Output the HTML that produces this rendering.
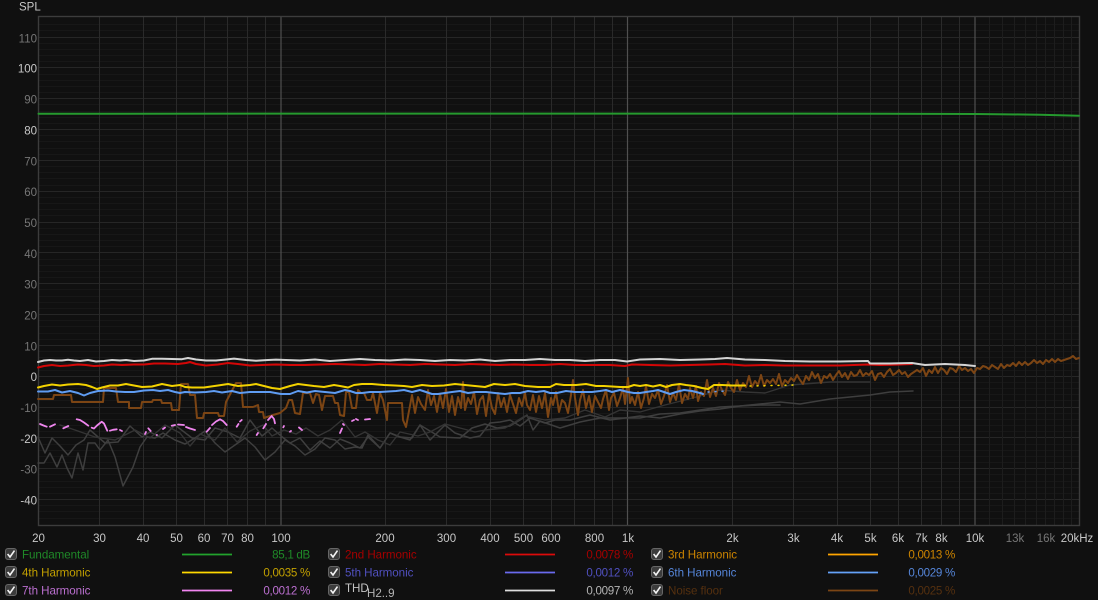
<!DOCTYPE html>
<html><head><meta charset="utf-8"><title>SPL</title>
<style>
html,body{margin:0;padding:0;background:#101010;width:1098px;height:600px;overflow:hidden}
svg{display:block;filter:blur(.35px)}
text{font-family:"Liberation Sans",sans-serif}
.ax{font-size:11.5px;fill:#c8c8c8}
.dim{fill:#767676}
.lg{font-size:11.6px;letter-spacing:-.05px}
.val{letter-spacing:-.3px}
.c{fill:none;stroke-linejoin:round;stroke-linecap:round}
</style></head><body>
<svg width="1098" height="600" viewBox="0 0 1098 600" xmlns="http://www.w3.org/2000/svg">
<rect width="1098" height="600" fill="#101010"/>
<!-- minor horizontal -->
<path stroke="#171717" stroke-width="1" fill="none" d="M38 24.500H1079M38 30.500H1079M38 43.500H1079M38 49.500H1079M38 55.500H1079M38 61.500H1079M38 74.500H1079M38 80.500H1079M38 86.500H1079M38 92.500H1079M38 104.500H1079M38 111.500H1079M38 117.500H1079M38 123.500H1079M38 135.500H1079M38 141.500H1079M38 148.500H1079M38 154.500H1079M38 166.500H1079M38 172.500H1079M38 178.500H1079M38 185.500H1079M38 197.500H1079M38 203.500H1079M38 209.500H1079M38 215.500H1079M38 228.500H1079M38 234.500H1079M38 240.500H1079M38 246.500H1079M38 259.500H1079M38 265.500H1079M38 271.500H1079M38 277.500H1079M38 289.500H1079M38 296.500H1079M38 302.500H1079M38 308.500H1079M38 320.500H1079M38 326.500H1079M38 333.500H1079M38 339.500H1079M38 351.500H1079M38 357.500H1079M38 363.500H1079M38 370.500H1079M38 382.500H1079M38 388.500H1079M38 394.500H1079M38 400.500H1079M38 413.500H1079M38 419.500H1079M38 425.500H1079M38 431.500H1079M38 444.500H1079M38 450.500H1079M38 456.500H1079M38 462.500H1079M38 474.500H1079M38 481.500H1079M38 487.500H1079M38 493.500H1079M38 505.500H1079M38 511.500H1079M38 518.500H1079"/>
<!-- major horizontal -->
<path stroke="#262626" stroke-width="1" fill="none" d="M38 37.500H1079M38 67.500H1079M38 98.500H1079M38 129.500H1079M38 160.500H1079M38 191.500H1079M38 222.500H1079M38 252.500H1079M38 283.500H1079M38 314.500H1079M38 345.500H1079M38 376.500H1079M38 407.500H1079M38 437.500H1079M38 468.500H1079M38 499.500H1079"/>
<!-- vertical -->
<path stroke="#2a2a2a" stroke-width="1" fill="none" d="M99.500 16V525M143.500 16V525M176.500 16V525M204.500 16V525M227.500 16V525M247.500 16V525M265.500 16V525M385.500 16V525M446.500 16V525M490.500 16V525M523.500 16V525M551.500 16V525M574.500 16V525M594.500 16V525M612.500 16V525M732.500 16V525M793.500 16V525M837.500 16V525M870.500 16V525M898.500 16V525M921.500 16V525M941.500 16V525M959.500 16V525"/>
<path stroke="#1d1d1d" stroke-width="1" fill="none" d="M989.500 16V525M1002.500 16V525M1014.500 16V525M1025.500 16V525M1036.500 16V525M1045.500 16V525M1054.500 16V525M1063.500 16V525M1071.500 16V525"/>
<path stroke="#505050" stroke-width="1.200" fill="none" d="M281 16V525M627.500 16V525M975 16V525"/>
<rect x="38.500" y="16.500" width="1041" height="509" fill="none" stroke="#3c3c3c" stroke-width="1.400"/>

<!-- gray harmonics traces -->
<g class="c" stroke="#3e3e3e" stroke-width="1.500">
<polyline points="38,463 44,463 50,453 57,467 62,455 67,468 72,478 78,453 83,470 88,443 95,443 100,450 108,440 115,457 123,486 133,467 140,447 147,437 155,438 163,433 175,440 185,444 195,438 205,431 215,443 225,452 235,445 245,438 255,447 265,460 275,452 285,440 295,446 305,455 315,449 325,438 335,440 345,449 355,447 362,448 368,435 380,448 390,433 400,437 410,440 420,425 440,437 460,438 472,428 485,424 497,428 510,426 520,420 527,415 533,430 540,421 560,428 580,422 600,418 620,418 640,418 660,414 680,413 700,410 720,407 740,406 760,404 780,402 800,404 830,399 850,397 870,395 890,392 913,391"/>
<polyline points="38,437 45,453 52,438 60,446 68,455 76,445 84,440 90,430 105,443 118,442 130,426 142,437 150,432 162,438 175,425 192,438 205,440 215,428 228,432 240,438 250,420 262,436 272,428 281,436 290,443 300,438 310,450 320,441 330,448 340,439 350,443 360,448 368,437 380,448 390,433 400,437 412,438 420,425 430,440 445,425 455,433 470,438 480,436 490,423 500,422 510,420 520,426 530,418 545,423 555,420 570,420 590,415 610,420 625,418 640,416 660,418 680,414 700,411 720,409 740,406 760,405 780,405"/>
</g>
<polyline class="c" stroke="#343434" stroke-width="1.400" points="60,425 75,430 95,437 115,440 135,430 150,438 165,425 180,433 190,446 200,434 215,440 225,428 237,442 250,431 263,425 272,436 284,430 296,434 306,428 318,436 330,430 342,420 355,437 365,432 378,440 390,445 400,432 418,436 430,432 445,424 460,428 475,432 485,430 505,428 525,416 545,420 565,418 585,410 605,417 620,410 640,412 665,405 685,400 700,396 720,390 745,392 765,393 790,385 830,382 870,382"/>
<!-- noise floor -->
<polyline class="c" stroke="#7c4514" stroke-width="2" points="38,399 53,399 54,395 71,395 72,402 103,402 104,388 116,388 118,402 129,402 129,408 141,408 142,402 152,402 153,400 161,400 162,403 171,403 172,410 179,410 181,384 188,384 190,395 195,395 197,418 203,418 204,413 218,413 219,416 224,416 226,402 236,383 241,383 243,407 253,407 258,405 259,412 263,412 264,418 273,415 280,413 286,408 289,400 292,400 295,413 300,414 303,393 310,393 313,403 316,394 319,395 322,410 325,396 333,396 335,403 338,403 340,415 344,416 346,392 349,392 352,408 356,408 358,390 361,393 364,393 367,400 371,400 373,393 377,413 380,393 383,400 387,420 388,403 394,403 402,403 403,420 406,427 412,395 415,413 418,397 421,404 425,410 428,390 431,405 434,396 437,412 440,394 443,408 446,389 449,412 452,396 455,415 458,397 461,408 463,382 465,410 468,398 471,404 474,392 477,414 480,400 483,396 486,416 489,394 492,408 495,414 498,393 501,407 504,398 507,412 510,395 513,404 516,413 519,398 522,406 525,393 527,405 530,410 533,395 536,412 539,396 542,408 545,393 548,417 551,398 553,405 556,392 559,412 562,400 565,403 568,413 571,395 573,380 575,398 578,415 580,400 583,390 586,408 589,396 592,412 595,396 598,402 601,408 603,399 606,390 609,410 611,398 614,393 617,406 620,398 623,388 625,404 628,378 630,403 632,397 635,405 638,392 641,408 644,398 646,386 649,404 652,394 655,398 658,390 661,404 664,396 667,385 670,402 673,393 676,400 679,384 682,403 685,394 688,399 690,388 693,398 696,386 698,401 701,392 704,396 707,380 710,397 713,388 716,396 719,383 722,390 725,395 728,382 731,388 734,392 737,380 740,390 743,383 746,387 749,376 752,387 755,381 758,385 761,375 764,386 767,380 770,383 773,379 776,384 779,374 782,386 785,380 788,383 791,378 794,381 797,375 800,380 803,384 806,376 809,380 812,372 815,378 818,374 821,383 824,376 827,378 830,374 833,380 836,375 839,371 842,377 845,373 848,379 851,372 854,376 857,375 860,370 863,376 866,373 869,375 872,371 875,380 878,374 881,373 884,377 887,372 890,369 893,375 896,373 899,370 902,374 905,372 908,377 911,374 914,372 917,370 920,372 923,368 926,376 929,370 932,373 935,367 938,373 941,368 944,370 947,374 950,368 953,369 956,372 959,366 962,370 965,368 968,371 971,369 974,373 977,368 980,369 983,366 986,367 989,369 992,365 995,367 998,369 1001,364 1004,368 1007,365 1010,366 1013,363 1016,366 1019,362 1022,365 1025,362 1028,365 1031,363 1034,360 1037,363 1040,361 1043,364 1046,360 1049,362 1052,359 1055,362 1058,359 1061,361 1064,360 1067,359 1070,358 1073,356 1076,359 1079,358"/>
<!-- 7th harmonic segments -->
<g class="c" stroke="#ef86ee" stroke-width="1.800">
<path d="M40 424L43.500 425.500L46.700 426.700M50 426.700L55 424.300M63.300 428.300L68.300 426M76.700 419.300L80 420L84 422.500L88.300 425.700M91.700 427.700L94 428.500L97 425.500L101.700 421.700L104 423.500L107.300 430.700M110 430.700L113 429.800L116.700 429.300M120 430L122 431M145 434L146 432M148.300 428.300L150.700 431M156.700 435L157 435M163 429L165 427.500M171.700 425.700L175 425M178 424.500L184 425M186 427L190 428.500L195 430M206.700 431.700L210 428M212 425L216 421.500L220 419.300L223 421L226.700 425M236.700 426.700L238.500 424M240 421.500L241.700 420M256.700 435L258 433M263.300 428.300L266 424M268 420L271.700 416L274 419L275 423.300M283.300 427.300L284 426M290 431.700L291 431M299 427.500L302 430M340 433L342 428.500M343 424L344 425M352 421L354 420M356 419L358 420M365 419.500L370 419"/>
</g>
<!-- blue 6th -->
<polyline class="c" stroke="#5f9cf2" stroke-width="2" points="38,391.500 48,391.500 55,390 62,392.500 70,391 78,393 84,395.500 90,393 98,391 108,390.500 116,391.500 125,392 134,392 144,390.500 153,390 160,391 168,390 175,392 180,393 185,392 195,392.500 206,392 214,391 222,392.500 232,391 240,393 250,392 260,392 270,392 281,394 290,394 298,391 307,392.500 315,391 325,392 335,393 345,390 350,391 356,393 362,393 370,392 380,392 388,391.500 396,391 404,390 412,392 420,390 426,392 432,394 438,394 445,393 452,392 460,391 468,393 476,392 486,392 495,393 505,394 512,393 520,393 528,391 536,392 544,391 550,393 557,393 566,391 575,392 584,392 592,392 600,391 606,390 612,392 620,390 628,392 634,393 640,393 646,392 653,391 658,390 664,392 670,394 676,392 684,390 692,391 700,393 703,394"/>
<path class="c" stroke="#5f9cf2" stroke-width="1.500" stroke-dasharray="1 6" d="M708 392L726 391"/>
<!-- yellow 4th -->
<polyline class="c" stroke="#f3d200" stroke-width="2" points="38,387.500 44,386 52,384.500 60,385.500 68,384.500 78,384 86,385 92,387 97,389 102,387.500 110,385.500 118,385.500 126,384 134,385.500 142,387 152,386.500 162,384 172,386 180,385 185,387 192,387.500 204,387.500 218,385.500 228,384 238,386 250,385 256,384 264,386 272,388 280,389 290,386 298,384 306,385 314,386 324,387 334,385 340,386 348,387.500 354,385 362,384 372,384 384,385 395,385.500 404,386 412,387 422,385 432,386 444,385.500 455,384 465,385 475,386 485,387 494,384 505,385 515,384 525,386 538,387 550,387 556,384 564,385 576,385 586,384 596,386 604,386 612,386.500 620,387 628,387 634,385 640,386 646,385 653,386.500 660,385 666,387 672,385 680,384 686,385 694,386 702,388 708,389 714,385 722,385 732,385.500 745,385.500"/>
<path class="c" stroke="#f3d200" stroke-width="1.500" stroke-dasharray="1 6" d="M750 386L795 385"/>
<!-- red 2nd -->
<polyline class="c" stroke="#d40606" stroke-width="2" points="38,367.500 44,366 52,365 60,366 68,365.500 78,364.500 86,365 94,366 104,365.500 112,364.500 122,365 134,364.500 144,364.500 154,363.500 165,363.500 178,364 186,363 190,362 196,364 206,365.500 218,364.500 228,363 238,364 250,365.500 262,365 276,364.500 290,365 305,365 320,364.500 335,364 350,364.500 365,365 380,364 395,364.500 410,365 425,364 440,364.500 455,365 470,364 485,364.500 500,365 515,364.500 530,365 545,365 560,364 575,365 590,365 610,365 625,366 632,364.500 650,365 670,365.500 690,365 710,364.500 725,364 745,365.500 765,365 785,365.500 810,365.500 840,365.500 868,364.500 880,365 900,364.500 912,364"/>
<!-- white THD -->
<polyline class="c" stroke="#d4d4d4" stroke-width="2" points="38,362 44,360.500 50,360 56,360.500 62,360.500 68,359.800 74,360.500 80,361 88,360 96,361.500 104,361 112,360 120,360.500 126,360 134,361 144,360.500 152,358.800 162,358.800 172,359 182,359.200 188,358 196,359.500 206,360.500 216,360.500 226,359.500 234,358.600 246,360 256,360.800 268,360 276,359.600 286,360 300,360.500 315,359.500 330,361 345,360 360,359 375,360 390,360.500 405,359.500 420,360 435,361 450,360 465,360.500 480,359.500 495,361 510,360 525,360 540,359 555,360 570,360 585,361 600,360 615,360 627,361.500 640,359.500 660,359 680,360 700,359.500 715,359 727,358 745,359.500 765,360 785,361 810,361.500 840,361.500 868,361 870,363.500 890,363.500 912,363 925,365 945,364 965,365 975,366"/>
<!-- green -->
<path class="c" stroke="#259a2e" stroke-width="2" d="M38.500 113.800L281 113.600L800 113.600L975 114L1040 114.700L1079 115.700"/>

<!-- axis labels -->
<text x="19" y="10.500" class="ax">SPL</text>
<g class="ax" text-anchor="end">
<text x="37" y="42.500" class="dim">110</text><text x="37" y="72.500">100</text><text x="37" y="103.500" class="dim">90</text><text x="37" y="134.500">80</text><text x="37" y="165.500" class="dim">70</text><text x="37" y="196" class="dim">60</text><text x="37" y="227" class="dim">50</text><text x="37" y="258" class="dim">40</text><text x="37" y="288.500" class="dim">30</text><text x="37" y="319.500" class="dim">20</text><text x="37" y="350.500" class="dim">10</text><text x="37" y="381">0</text><text x="37" y="412" class="dim">-10</text><text x="37" y="443">-20</text><text x="37" y="473.500" class="dim">-30</text><text x="37" y="504.500">-40</text>
</g>
<g class="ax" text-anchor="middle">
<text x="38.500" y="542">20</text><text x="99.500" y="542">30</text><text x="143" y="542">40</text><text x="176.500" y="542">50</text><text x="204" y="542">60</text><text x="227.500" y="542">70</text><text x="247.500" y="542">80</text><text x="281" y="542">100</text><text x="385" y="542">200</text><text x="446.500" y="542">300</text><text x="490" y="542">400</text><text x="523.500" y="542">500</text><text x="551" y="542">600</text><text x="594.500" y="542">800</text><text x="628" y="542">1k</text><text x="732.500" y="542">2k</text><text x="793.500" y="542">3k</text><text x="837" y="542">4k</text><text x="870.500" y="542">5k</text><text x="898" y="542">6k</text><text x="921.500" y="542">7k</text><text x="941.500" y="542">8k</text><text x="975" y="542">10k</text><text x="1015" y="542" class="dim">13k</text><text x="1046" y="542" class="dim">16k</text><text x="1077" y="542">20kHz</text>
</g>

<!-- checkboxes -->
<defs>
<g id="cb"><rect x=".5" y=".5" width="11" height="11" rx="2.500" fill="#3c3c3c" stroke="#666"/><path d="M2.600 6L5 9L9.500 2.600" fill="none" stroke="#f4f4f4" stroke-width="1.600"/></g>
</defs>
<use href="#cb" x="5" y="548"/><use href="#cb" x="5" y="566"/><use href="#cb" x="5" y="584"/>
<use href="#cb" x="328" y="548"/><use href="#cb" x="328" y="566"/><use href="#cb" x="328" y="584"/>
<use href="#cb" x="651" y="548"/><use href="#cb" x="651" y="566"/><use href="#cb" x="651" y="584"/>

<!-- legend -->
<g class="lg">
<text x="22" y="558.500" fill="#1f8a28">Fundamental</text>
<text x="22" y="576.500" fill="#c2a000">4th Harmonic</text>
<text x="22" y="594.500" fill="#bb6fd0">7th Harmonic</text>
<g text-anchor="end" class="val">
<text x="310" y="558.500" fill="#1f8a28">85,1 dB</text>
<text x="310" y="576.500" fill="#c2a000">0,0035 %</text>
<text x="310" y="594.500" fill="#bb6fd0">0,0012 %</text>
<text x="633" y="558.500" fill="#a50000">0,0078 %</text>
<text x="633" y="576.500" fill="#5050bf">0,0012 %</text>
<text x="633" y="594.500" fill="#b4b4b4">0,0097 %</text>
<text x="955" y="558.500" fill="#cc8400">0,0013 %</text>
<text x="955" y="576.500" fill="#5585d8">0,0029 %</text>
<text x="955" y="594.500" fill="#55300f">0,0025 %</text>
</g>
<text x="345" y="558.500" fill="#a50000">2nd Harmonic</text>
<text x="345" y="576.500" fill="#5050bf">5th Harmonic</text>
<text x="345" y="592" fill="#c4c4c4">THD</text>
<text x="367" y="597" fill="#b4b4b4">H2..9</text>
<text x="668" y="558.500" fill="#cc8400">3rd Harmonic</text>
<text x="668" y="576.500" fill="#5585d8">6th Harmonic</text>
<text x="668" y="594.500" fill="#55300f">Noise floor</text>
</g>
<!-- legend lines -->
<g stroke-width="1.800" fill="none">
<path stroke="#22a32d" d="M182 554.500H232"/><path stroke="#ffd900" d="M182 572.500H232"/><path stroke="#f185f0" d="M182 590.500H232"/>
<path stroke="#dc0a0a" d="M505 554.500H555"/><path stroke="#6a6aee" d="M505 572.500H555"/><path stroke="#dcdcdc" d="M505 590.500H555"/>
<path stroke="#ffa500" d="M828 554.500H878"/><path stroke="#64a2f8" d="M828 572.500H878"/><path stroke="#7c4514" d="M828 590.500H878"/>
</g>
</svg>
</body></html>
